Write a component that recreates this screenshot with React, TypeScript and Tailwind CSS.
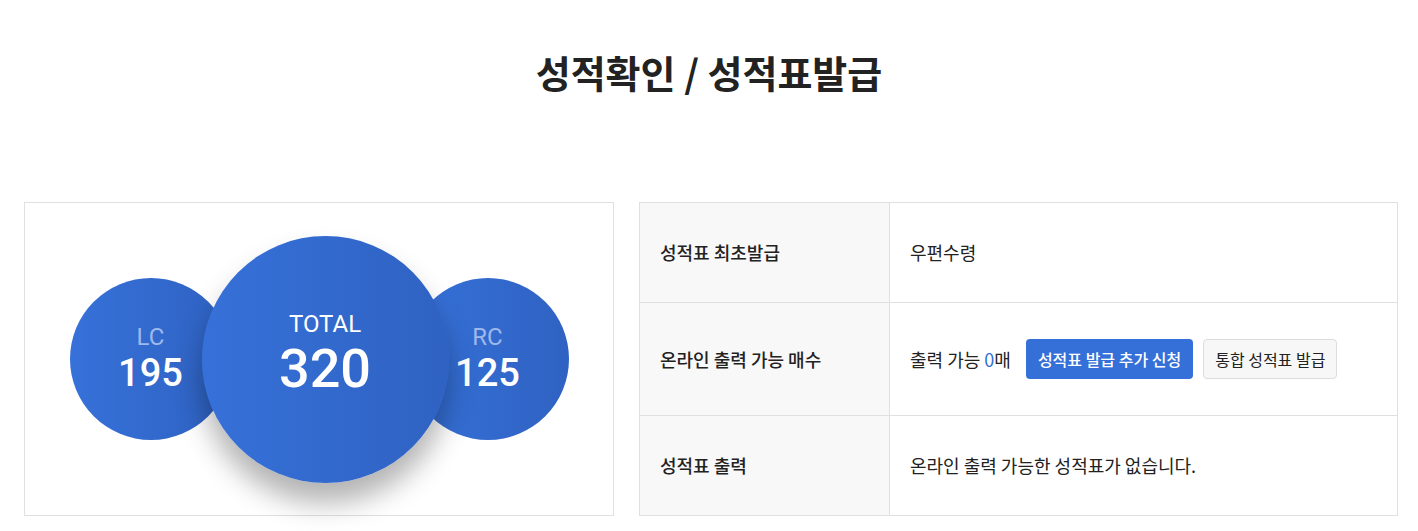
import React from "react";

const KR = "font-['Noto_Sans_CJK_KR','Noto_Sans',sans-serif]";

function Circle({
  label,
  value,
  size,
  big,
}: {
  label: string;
  value: string;
  size: string;
  big?: boolean;
}) {
  return (
    <div
      className={`${size} flex shrink-0 flex-col items-center justify-center rounded-full bg-gradient-to-r from-[#3671d9] to-[#2f62c2] font-['Roboto',sans-serif] ${
        big ? "relative z-10 shadow-[0_20px_28px_rgba(0,0,0,0.3)]" : ""
      }`}
    >
      <span
        className={
          big
            ? "text-[24px] leading-[30px] text-white"
            : "text-[24px] leading-[28px] text-[#9fb8ec]"
        }
      >
        {label}
      </span>
      <span
        className={
          big
            ? "text-[54px] font-medium leading-[60px] text-white"
            : "text-[38px] font-medium leading-[44px] text-white"
        }
      >
        {value}
      </span>
    </div>
  );
}

function Row({
  head,
  height,
  children,
  last,
}: {
  head: string;
  height: string;
  children: React.ReactNode;
  last?: boolean;
}) {
  return (
    <div className={`flex ${height} ${last ? "" : "border-b border-[#e0e0e0]"}`}>
      <div className="flex w-[250px] shrink-0 items-center border-r border-[#e0e0e0] bg-[#f8f8f8] pl-[20px] text-[18px] font-medium text-[#222]">
        {head}
      </div>
      <div className="flex flex-1 items-center pl-[20px] text-[18px] text-[#222]">
        {children}
      </div>
    </div>
  );
}

export default function App() {
  return (
    <div className={`min-h-[531px] bg-white ${KR}`}>
      <h1 className="pt-[44px] text-center text-[38px] font-bold leading-[56px] text-[#222]">
        성적확인 / 성적표발급
      </h1>

      <div className="mt-[102px] flex gap-[25px] pl-[24px] pr-[20px]">
        {/* Score circles */}
        <div className="flex h-[314px] w-[590px] shrink-0 items-center justify-center border border-[#e0e0e0]">
          <Circle label="LC" value="195" size="h-[162px] w-[162px] -mr-[30px]" />
          <Circle label="TOTAL" value="320" size="h-[247px] w-[247px] pb-[10px]" big />
          <Circle label="RC" value="125" size="h-[162px] w-[162px] -ml-[42px]" />
        </div>

        {/* Issue table */}
        <div className="flex h-[314px] flex-1 flex-col border border-[#e0e0e0]">
          <Row head="성적표 최초발급" height="h-[100px]">
            우편수령
          </Row>
          <Row head="온라인 출력 가능 매수" height="h-[113px]">
            <span>
              출력 가능 <span className="text-[#356fd8]">0</span>매
            </span>
            <button
              type="button"
              className="ml-[15px] h-[40px] rounded-[4px] bg-[#356fd8] px-[12px] text-[16px] font-medium text-white"
            >
              성적표 발급 추가 신청
            </button>
            <button
              type="button"
              className="ml-[10px] h-[40px] rounded-[4px] border border-[#dcdcdc] bg-[#f7f7f7] px-[11px] text-[16px] text-[#222]"
            >
              통합 성적표 발급
            </button>
          </Row>
          <Row head="성적표 출력" height="flex-1" last>
            온라인 출력 가능한 성적표가 없습니다.
          </Row>
        </div>
      </div>
    </div>
  );
}
